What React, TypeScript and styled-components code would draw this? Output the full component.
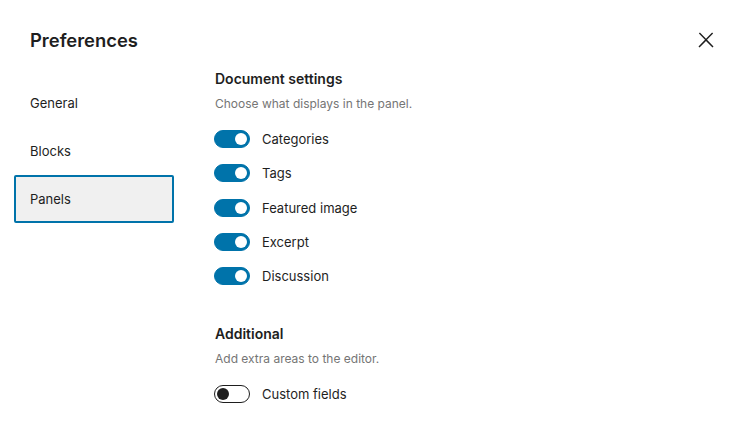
import React, { useState } from "react";
import styled, { createGlobalStyle } from "styled-components";

const Global = createGlobalStyle`
  html, body { margin: 0; padding: 0; background: #fff; }
  body { font-family: Inter, "Noto Sans", "Liberation Sans", sans-serif; color: #1e1e1e; }
  * { box-sizing: border-box; }
`;

const Modal = styled.div`
  width: 745px;
  height: 422px;
  background: #fff;
  display: flex;
  flex-direction: column;
  overflow: hidden;
`;

const Header = styled.div`
  height: 64px;
  display: flex;
  align-items: flex-start;
  justify-content: space-between;
  padding: 28px 27px 0 30px;
`;

const Title = styled.h1`
  margin: 0;
  font-size: 18.4px;
  font-weight: 600;
  line-height: 24px;
  color: #1e1e1e;
`;

const CloseButton = styled.button`
  width: 24px;
  height: 24px;
  padding: 0;
  border: 0;
  background: none;
  display: flex;
  align-items: center;
  justify-content: center;
  color: #1e1e1e;
  cursor: pointer;
`;

const Body = styled.div`
  display: flex;
  gap: 41px;
  padding-left: 14px;
`;

const TabList = styled.div`
  width: 160px;
  display: flex;
  flex-direction: column;
  margin-top: 15px;
`;

const Tab = styled.button<{ $active?: boolean }>`
  height: 48px;
  padding: 0 14px;
  text-align: left;
  font-family: inherit;
  font-size: 13px;
  color: #1e1e1e;
  background: ${(p) => (p.$active ? "#f0f0f0" : "transparent")};
  border: ${(p) => (p.$active ? "2px solid #0073aa" : "2px solid transparent")};
  border-radius: 2px;
  cursor: pointer;
`;

const Content = styled.div`
  display: flex;
  flex-direction: column;
  padding-top: 5px;
`;

const Section = styled.section<{ $gap?: number }>`
  display: flex;
  flex-direction: column;
  margin-top: ${(p) => p.$gap ?? 0}px;
`;

const SectionTitle = styled.h2`
  margin: 0;
  font-size: 14px;
  font-weight: 600;
  line-height: 20px;
  color: #1e1e1e;
`;

const SectionDesc = styled.p`
  margin: 7px 0 0;
  font-size: 12px;
  line-height: 16px;
  color: #757575;
`;

const OptionList = styled.div`
  display: flex;
  flex-direction: column;
  gap: 16.25px;
  margin-top: 18px;
`;

const Option = styled.label`
  display: flex;
  align-items: center;
  gap: 12px;
  height: 18px;
  font-size: 13px;
  color: #1e1e1e;
  cursor: pointer;
`;

const Track = styled.span<{ $on: boolean }>`
  position: relative;
  width: 36px;
  height: 18px;
  margin-left: -1px;
  border-radius: 9px;
  flex: none;
  background: ${(p) => (p.$on ? "#0073aa" : "#fff")};
  border: 1px solid ${(p) => (p.$on ? "#0073aa" : "#1e1e1e")};
`;

const Knob = styled.span<{ $on: boolean }>`
  position: absolute;
  top: 2px;
  left: ${(p) => (p.$on ? "20px" : "2px")};
  width: 12px;
  height: 12px;
  border-radius: 50%;
  background: ${(p) => (p.$on ? "#fff" : "#1e1e1e")};
`;

const Toggle = ({ label, initial }: { label: string; initial: boolean }) => {
  const [on, setOn] = useState(initial);
  return (
    <Option onClick={() => setOn(!on)}>
      <Track $on={on}>
        <Knob $on={on} />
      </Track>
      {label}
    </Option>
  );
};

export default function App() {
  return (
    <>
      <Global />
      <Modal>
        <Header>
          <Title>Preferences</Title>
          <CloseButton aria-label="Close">
            <svg width="24" height="24" viewBox="0 0 24 24" fill="currentColor">
              <path d="M13 11.8l6.1-6.3-1-1-6.1 6.2-6.1-6.2-1 1 6.1 6.3-6.5 6.7 1 1 6.5-6.6 6.5 6.6 1-1z" />
            </svg>
          </CloseButton>
        </Header>
        <Body>
          <TabList>
            <Tab>General</Tab>
            <Tab>Blocks</Tab>
            <Tab $active>Panels</Tab>
          </TabList>
          <Content>
            <Section>
              <SectionTitle>Document settings</SectionTitle>
              <SectionDesc>Choose what displays in the panel.</SectionDesc>
              <OptionList>
                <Toggle label="Categories" initial />
                <Toggle label="Tags" initial />
                <Toggle label="Featured image" initial />
                <Toggle label="Excerpt" initial />
                <Toggle label="Discussion" initial />
              </OptionList>
            </Section>
            <Section $gap={39}>
              <SectionTitle>Additional</SectionTitle>
              <SectionDesc>Add extra areas to the editor.</SectionDesc>
              <OptionList>
                <Toggle label="Custom fields" initial={false} />
              </OptionList>
            </Section>
          </Content>
        </Body>
      </Modal>
    </>
  );
}
